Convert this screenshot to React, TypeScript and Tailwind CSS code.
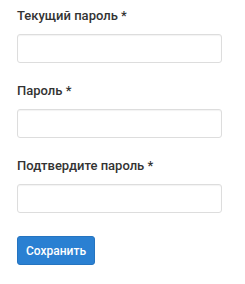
export default function App() {
  const fields = ["Текущий пароль", "Пароль", "Подтвердите пароль"];
  return (
    <div className="w-[245px] h-[284px] bg-white font-['Roboto',Arial,sans-serif] text-[#333] px-[17px] pt-[6px]">
      <form className="flex flex-col">
        {fields.map((f) => (
          <div key={f} className="flex flex-col mb-[18px]">
            <label className="text-[13px] leading-[20px] font-medium mb-[8px]">
              {f} *
            </label>
            <input
              type="password"
              className="h-[29px] w-[205px] rounded-[3px] border border-[#ddd] shadow-[inset_0_1px_1px_rgba(0,0,0,0.05)] outline-none"
            />
          </div>
        ))}
        <div className="pt-[5px]">
          <button
            type="button"
            className="h-[29px] px-[8px] rounded-[3px] bg-[#2a80d2] border border-[#2574c0] text-white text-[12px] font-medium"
          >
            Сохранить
          </button>
        </div>
      </form>
    </div>
  );
}
